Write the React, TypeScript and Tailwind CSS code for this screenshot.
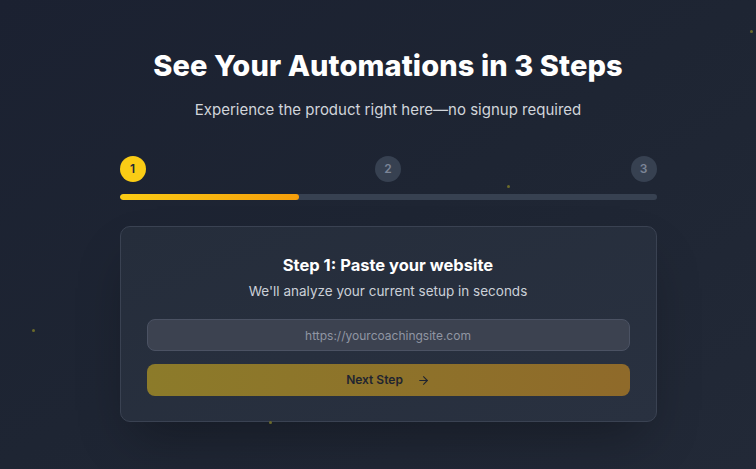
import { useState } from 'react';
import { ArrowRight } from 'lucide-react';

// Little glowing specks scattered over the background
const specks = [
  { left: 'left-[750px]', top: 'top-[30px]' },
  { left: 'left-[507px]', top: 'top-[185px]' },
  { left: 'left-[32px]', top: 'top-[329px]' },
  { left: 'left-[269px]', top: 'top-[421px]' },
];

function StepDot({ n, active }: { n: number; active: boolean }) {
  return (
    <div
      className={`flex h-[26px] w-[26px] items-center justify-center rounded-full text-[12px] font-semibold ${
        active ? 'bg-[#facc15] text-[#1f2937]' : 'bg-[#374151] text-[#7c8597]'
      }`}
    >
      {n}
    </div>
  );
}

function App() {
  const [url, setUrl] = useState('');
  const step = 1;

  return (
    <div
      className="relative min-h-[469px] overflow-hidden bg-gradient-to-br from-[#1b2131] via-[#1e2533] to-[#222937] pl-5 text-white"
      style={{ fontFamily: 'Inter, "Noto Sans", sans-serif' }}
    >
      {specks.map((s, i) => (
        <span
          key={i}
          className={`absolute ${s.left} ${s.top} h-[3px] w-[3px] rounded-full bg-[#6b6a2a]`}
        />
      ))}

      <div className="mx-auto flex w-[537px] flex-col items-center pt-[46px]">
        <h1 className="text-[29px] leading-[40px] font-extrabold tracking-[0.1px]">
          See Your Automations in 3 Steps
        </h1>
        <p className="mt-[12px] text-[15px] leading-[24px] text-[#d1d5db]">
          Experience the product right here—no signup required
        </p>

        {/* Step indicator */}
        <div className="mt-[34px] w-full">
          <div className="flex items-center justify-between">
            {[1, 2, 3].map((n) => (
              <StepDot key={n} n={n} active={n === step} />
            ))}
          </div>
          <div className="mt-[12px] h-[6px] w-full overflow-hidden rounded-full bg-[#374151]">
            <div
              className="h-full rounded-full bg-gradient-to-r from-[#facc15] to-[#f59e0b]"
              style={{ width: `${(step / 3) * 100}%` }}
            />
          </div>
        </div>

        {/* Card */}
        <div className="mt-[26px] w-full rounded-[10px] border border-[#3a4252] bg-gradient-to-br from-[#252d3b] to-[#293140] px-[26px] pt-[26px] pb-[25px] shadow-2xl shadow-black/30">
          <h2 className="text-center text-[16.5px] leading-[24px] font-bold">
            Step 1: Paste your website
          </h2>
          <p className="mt-[4px] text-center text-[13.5px] leading-[20px] text-[#cbd0d8]">
            We'll analyze your current setup in seconds
          </p>
          <input
            value={url}
            onChange={(e) => setUrl(e.target.value)}
            placeholder="https://yourcoachingsite.com"
            className="mt-[18px] h-[32px] w-full rounded-[8px] border border-[#4b5263] bg-[#3c4250] text-center text-[12px] text-white outline-none placeholder:text-[#9096a3]"
          />
          <button className="mt-[13px] flex h-[32px] w-full items-center justify-center gap-[14px] rounded-[8px] bg-gradient-to-r from-[#8c7b2a] to-[#8f6a2a] text-[12px] font-semibold text-[#1f2430]">
            Next Step
            <ArrowRight size={13} strokeWidth={2} />
          </button>
        </div>
      </div>
    </div>
  );
}

export default App;
